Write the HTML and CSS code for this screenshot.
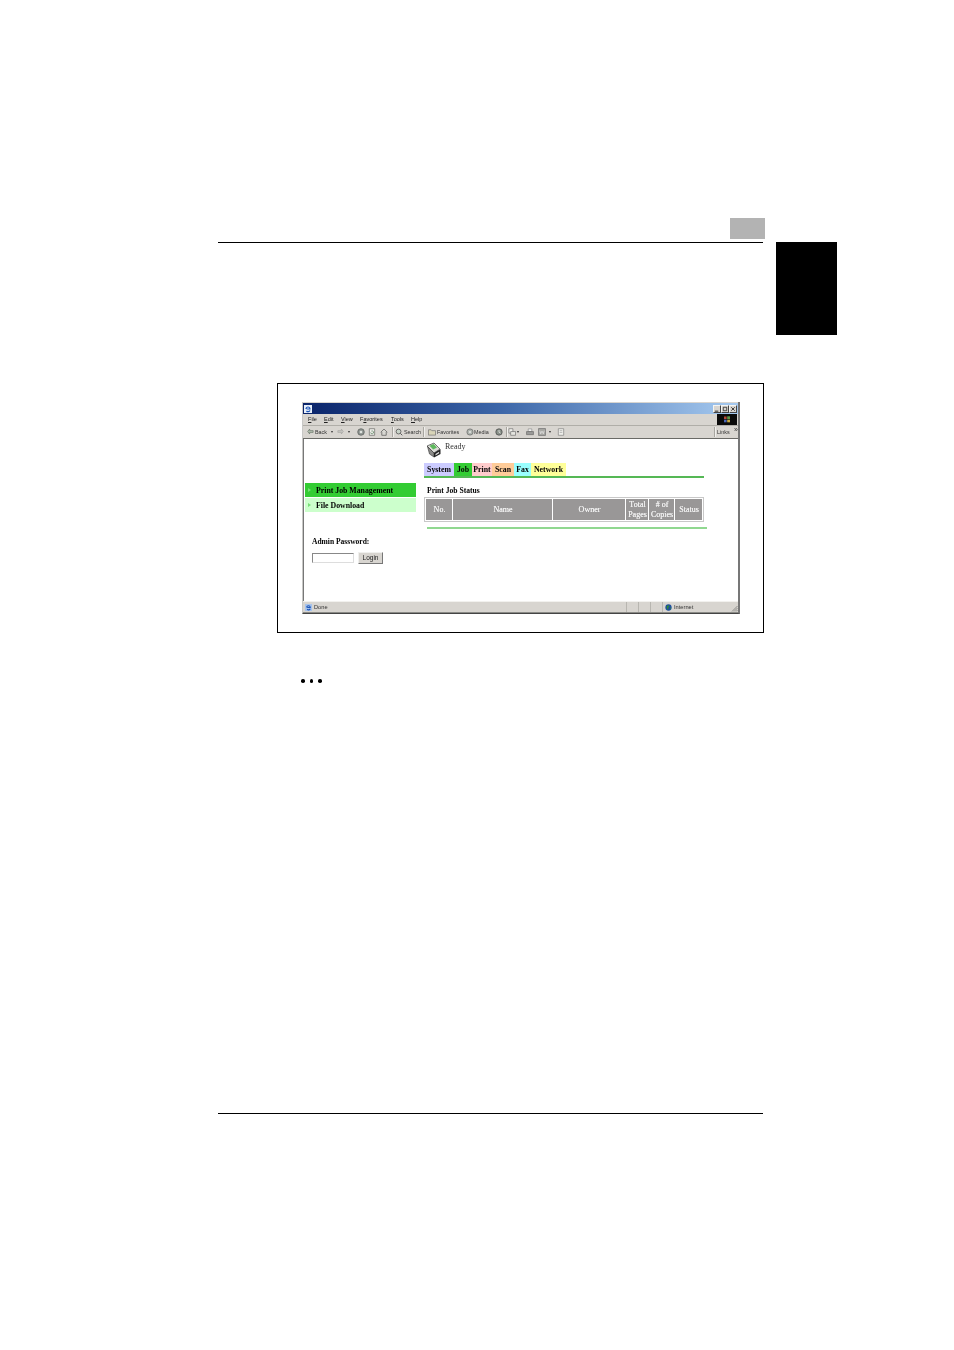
FILE: index.html
```html
<!DOCTYPE html>
<html lang="en">
<head>
<meta charset="utf-8">
<title>Print Job Status</title>
<link rel="stylesheet" href="styles.css">
</head>
<body>
<div class="page">
  <header class="head">
    <div class="chapter-box"></div>
    <div class="rule"></div>
  </header>
  <div class="side-tab"></div>

  <section class="frame">
    <div class="window">
      <div class="titlebar">
        <svg class="app-icon" viewBox="0 0 8 8"><rect width="8" height="8" fill="#e8f0fa"/><path d="M2 4a2 2 0 1 1 4 0H2.600M6 5.500a2 2 0 0 1-3.500.3" fill="none" stroke="#1c55b8" stroke-width="1.200"/></svg>
        <div class="win-btns">
          <span class="win-btn"><svg viewBox="0 0 7 7"><path d="M1 6h4" stroke="#111" stroke-width="1"/></svg></span>
          <span class="win-btn"><svg viewBox="0 0 7 7"><path d="M1.500 1.500h4v4h-4z" fill="none" stroke="#111" stroke-width=".8"/></svg></span>
          <span class="win-btn"><svg viewBox="0 0 7 7"><path d="M1.500 1.500l4 4M5.500 1.500l-4 4" stroke="#111" stroke-width=".9"/></svg></span>
        </div>
      </div>

      <div class="menubar">
        <nav class="menu">
          <span class="m-file"><u>F</u>ile</span>
          <span class="m-edit"><u>E</u>dit</span>
          <span class="m-view"><u>V</u>iew</span>
          <span class="m-fav">F<u>a</u>vorites</span>
          <span class="m-tools"><u>T</u>ools</span>
          <span class="m-help"><u>H</u>elp</span>
        </nav>
        <div class="throbber">
          <svg viewBox="0 0 20 11"><rect width="20" height="11" fill="#0a0a0a"/><path d="M7 2.500h2.600v2.600H7z" fill="#b84a38"/><path d="M10.200 2.300h2.800v2.800h-2.800z" fill="#5a9a48"/><path d="M7 5.700h2.600v2.600H7z" fill="#4a66b8"/><path d="M10.200 5.700h2.800v2.600h-2.800z" fill="#c8aa40"/></svg>
        </div>
      </div>

      <div class="toolbar">
        <svg class="ic w8" viewBox="0 0 8 8"><path d="M7 3H3V1.200L.8 4 3 6.800V5h4z" fill="#b8c4b4" stroke="#5c6a5c" stroke-width=".7"/></svg>
        <span class="tb-text t-back">Back</span>
        <span class="drop d-back"></span>
        <svg class="ic w8 i-fwd" viewBox="0 0 8 8"><path d="M1 3h4V1.200L7.200 4 5 6.800V5H1z" fill="#c8c8c4" stroke="#a0a09c" stroke-width=".7"/></svg>
        <span class="drop d-fwd"></span>
        <svg class="ic w9 i-stop" viewBox="0 0 9 9"><circle cx="4.500" cy="4.500" r="3.700" fill="#8e9490" stroke="#5a5f5c" stroke-width=".8"/><circle cx="4.500" cy="4.500" r="1.500" fill="#dfe3df"/></svg>
        <svg class="ic w9 i-ref" viewBox="0 0 9 9"><path d="M1.500.8h6v7.400h-6z" fill="#eeeeea" stroke="#6a6a66" stroke-width=".8"/><path d="M3 5a1.600 1.600 0 1 0 .8-1.500" fill="none" stroke="#4f7a55" stroke-width=".8"/></svg>
        <svg class="ic w9 i-home" viewBox="0 0 9 9"><path d="M.8 4.800L4.500 1.200l3.700 3.600M2 4.500v3.700h5V4.500" fill="#d8d8d2" stroke="#555" stroke-width=".8"/></svg>
        <span class="tb-sep s-a"></span>
        <svg class="ic w9 i-search" viewBox="0 0 9 9"><circle cx="4" cy="4" r="2.700" fill="#c9d4c9" stroke="#555" stroke-width=".9"/><path d="M6 6l2.200 2.200" stroke="#555" stroke-width="1.100"/></svg>
        <span class="tb-text t-search">Search</span>
        <span class="tb-sep s-b"></span>
        <svg class="ic w9 i-favs" viewBox="0 0 9 9"><path d="M.5 2h3l.8 1h4.200v5H.5z" fill="#d8d4b8" stroke="#666" stroke-width=".7"/></svg>
        <span class="tb-text t-favs">Favorites</span>
        <svg class="ic w9 i-media" viewBox="0 0 9 9"><circle cx="4.500" cy="4.500" r="3.500" fill="#aeb4ae" stroke="#666" stroke-width=".8"/><circle cx="4.500" cy="4.500" r="1" fill="#eee"/></svg>
        <span class="tb-text t-media">Media</span>
        <svg class="ic w9 i-hist" viewBox="0 0 9 9"><circle cx="4.500" cy="4.500" r="3.600" fill="#8a928a" stroke="#444" stroke-width=".8"/><path d="M4.500 2.200v2.500l1.700 1" fill="none" stroke="#eee" stroke-width=".8"/></svg>
        <span class="tb-sep s-c"></span>
        <svg class="ic w9 i-mail" viewBox="0 0 9 9"><path d="M1 .8h4.500v5H1z" fill="#f0f0ec" stroke="#666" stroke-width=".7"/><path d="M3 4h5.500v4.200H3z" fill="#e6e6e0" stroke="#666" stroke-width=".7"/></svg>
        <span class="drop d-mail"></span>
        <svg class="ic w9 i-print" viewBox="0 0 9 9"><path d="M2.500 1h4v3h-4z" fill="#f2f2f2" stroke="#777" stroke-width=".6"/><path d="M.6 4h7.800v3.500H.6z" fill="#9a9a98" stroke="#555" stroke-width=".6"/></svg>
        <svg class="ic w9 i-word" viewBox="0 0 9 9"><path d="M.6.6h7.800v7.800H.6z" fill="#a8a8a4" stroke="#666" stroke-width=".7"/><path d="M2 3l1 3.500L4.500 3.500 6 6.500 7 3" fill="none" stroke="#eee" stroke-width=".7"/></svg>
        <span class="drop d-word"></span>
        <svg class="ic w9 i-disc" viewBox="0 0 9 9"><path d="M1.500.8h6v7.400h-6z" fill="#eeeeea" stroke="#777" stroke-width=".7"/><path d="M3 3h3M3 5h3" stroke="#999" stroke-width=".7"/></svg>
        <span class="tb-sep s-d"></span>
        <span class="tb-text t-links">Links</span>
        <span class="tb-more">»</span>
      </div>

      <div class="content">
        <aside class="sidebar">
          <a class="side-item is-active"><span class="arrow"></span>Print Job Management</a>
          <a class="side-item"><span class="arrow"></span>File Download</a>
          <div class="login-label">Admin Password:</div>
          <div class="login-row">
            <span class="pw"></span>
            <span class="login-btn">Login</span>
          </div>
        </aside>
        <main class="main">
          <div class="status-line">
            <svg class="printer" viewBox="0 0 16 16">
              <path d="M1 4l7-3 6 6-6 4z" fill="#dcdcd8" stroke="#444" stroke-width=".7"/>
              <path d="M3.500 3.800l4-1.800 3.500 3.500-3.800 2z" fill="#5db85d"/>
              <path d="M1.500 4.500L3.500 12l4.500 3V11z" fill="#8a8a88" stroke="#333" stroke-width=".6"/>
              <path d="M8 11l6.500-4v5L8 15.500z" fill="#222"/>
              <path d="M9.500 12l3.600-2.200v1.500l-3.600 2.200z" fill="#dedede"/>
            </svg>
            <span>Ready</span>
          </div>
          <div class="tabs">
            <span class="tab t-system">System</span>
            <span class="tab t-job">Job</span>
            <span class="tab t-print">Print</span>
            <span class="tab t-scan">Scan</span>
            <span class="tab t-fax">Fax</span>
            <span class="tab t-network">Network</span>
          </div>
          <div class="tabs-rule"></div>
          <h1 class="job-title">Print Job Status</h1>
          <table class="jobs">
            <thead>
              <tr>
                <th class="c-no">No.</th>
                <th class="c-name">Name</th>
                <th class="c-owner">Owner</th>
                <th class="c-total">Total<br>Pages</th>
                <th class="c-copies"># of<br>Copies</th>
                <th class="c-status">Status</th>
              </tr>
            </thead>
          </table>
          <div class="jobs-rule"></div>
        </main>
      </div>

      <footer class="statusbar">
        <svg class="done-ic" viewBox="0 0 8 8"><rect width="8" height="8" fill="#a8c4ec"/><path d="M2 4a2 2 0 1 1 4 0H2.600M6 5.500a2 2 0 0 1-3.500.3" fill="none" stroke="#1c55b8" stroke-width="1.300"/></svg>
        <span class="done">Done</span>
        <span class="cell"></span>
        <span class="cell"></span>
        <span class="cell"></span>
        <span class="zone">
          <svg class="globe" viewBox="0 0 8 8"><circle cx="4" cy="4" r="3.600" fill="#1f4f9e"/><path d="M2 2.200l2-.8 1 1.500-1.500 1.500.5 2-1.500-.5-.5-2zM5.500 4.500l1.500-.5-.5 2z" fill="#2e8a3a"/></svg>
          Internet
        </span>
        <svg class="grip" viewBox="0 0 7 7"><path d="M6.500 1L1 6.500M6.500 3L3 6.500M6.500 5L5 6.500" stroke="#7c7c78" stroke-width=".8"/></svg>
      </footer>
    </div>
  </section>

  <div class="dots"><i></i><i></i><i></i></div>
  <div class="foot-rule"></div>
</div>
</body>
</html>
```

FILE: styles.css
```css
* { box-sizing: border-box; }
html, body { margin: 0; padding: 0; background: #fff; }
.page { position: relative; width: 954px; height: 1350px; padding: 218px 0 0 218px; overflow: hidden; }

.head { width: 547px; }
.chapter-box { width: 35px; height: 21px; margin-left: 512px; background: #b3b3b3; }
.rule { width: 545px; height: 1px; margin-top: 3px; background: #000; }
.side-tab { position: absolute; left: 776px; top: 242px; width: 61px; height: 93px; background: #000; }

.frame { width: 487px; height: 250px; margin: 140px 0 0 59px; padding: 18px 0 0 24px; border: 1px solid #000; }
.window { display: flex; flex-direction: column; width: 438px; height: 212px; padding-top: 1px; background: #d8d5d0; border-right: 2px solid #777; border-bottom: 1px solid #444; border-left: 1px solid #c8c8c6; font-family: "Liberation Sans", sans-serif; filter: blur(.35px); }

.titlebar { display: flex; align-items: center; justify-content: space-between; flex: none; height: 11px; padding: 0 1px; background: linear-gradient(90deg, #0a246a 0%, #3c66a8 45%, #a6caf0 100%); }
.app-icon { width: 8px; height: 8px; }
.win-btns { display: flex; }
.win-btn { display: block; width: 8px; height: 8px; background: #d8d5d0; border: 1px solid; border-color: #f4f4f2 #444 #444 #f4f4f2; }
.win-btn svg { display: block; width: 6px; height: 6px; }

.menubar { display: flex; align-items: center; justify-content: space-between; flex: none; height: 12px; border-bottom: 1px solid #b0aea8; }
.menu { display: flex; padding: 0 0 2px 5px; font-size: 5.500px; color: #222; }
.menu span { display: block; }
.m-file { width: 16px; }
.m-edit { width: 17px; }
.m-view { width: 19px; }
.m-fav { width: 31px; }
.m-tools { width: 20px; }
.throbber { width: 20px; height: 11px; margin-right: 1px; }
.throbber svg { display: block; width: 20px; height: 11px; }

.toolbar { display: flex; align-items: center; flex: none; height: 13px; padding: 0 0 1px 4px; font-size: 5.400px; color: #333; border-bottom: 1px solid #6a6a66; }
.ic { flex: none; display: block; }
.w8 { width: 7px; height: 7px; }
.w9 { width: 8px; height: 8px; }
.tb-text { display: block; flex: none; }
.t-back { width: 12px; margin-left: 1px; }
.drop { flex: none; width: 0; height: 0; border: 1.500px solid transparent; border-top: 2px solid #333; border-bottom: 0; }
.d-back { margin-left: 4px; }
.i-fwd { margin-left: 4px; }
.d-fwd { margin-left: 4px; }
.i-stop { margin-left: 7px; }
.i-ref { margin-left: 3px; }
.i-home { margin-left: 4px; }
.tb-sep { flex: none; display: block; width: 1px; height: 10px; background: #a8a6a0; border-right: 1px solid #f0efec; box-sizing: content-box; }
.s-a { margin-left: 4px; }
.i-search { margin-left: 1px; }
.t-search { width: 17px; margin-left: 1px; }
.s-b { margin-left: 2px; }
.i-favs { margin-left: 3px; }
.t-favs { width: 24px; margin-left: 1px; }
.i-media { margin-left: 5px; }
.t-media { width: 15px; }
.i-hist { margin-left: 6px; }
.s-c { margin-left: 3px; }
.i-mail { margin-left: 0; }
.d-mail { margin-left: 1px; }
.i-print { margin-left: 7px; }
.i-word { margin-left: 4px; }
.d-word { margin-left: 3px; }
.i-disc { margin-left: 6px; }
.s-d { margin-left: 149px; }
.t-links { width: 14px; margin-left: 1px; }
.tb-more { margin-top: -3px; margin-left: 3px; font-size: 7px; line-height: 6px; }

.content { display: grid; grid-template-columns: 120px 1fr; flex: 1; min-height: 0; background: #fff; font-family: "Liberation Serif", serif; color: #000; border-left: 1px solid #777; }
.sidebar { padding: 44px 8px 0 1px; }
.side-item { display: flex; align-items: center; height: 14px; margin-bottom: 1px; padding-left: 3px; font-size: 7.800px; font-weight: bold; background: #ccffcc; }
.side-item.is-active { background: #33cc33; }
.arrow { width: 0; height: 0; margin-right: 5px; border: 2.500px solid transparent; border-left: 3px solid #77e077; border-right: 0; }
.login-label { margin: 25px 0 0 7px; font-size: 7.500px; line-height: 9px; font-weight: bold; }
.login-row { display: flex; align-items: center; gap: 4px; margin: 6px 0 0 7px; }
.pw { display: block; width: 42px; height: 10px; background: #fff; border: 1px solid; border-color: #888 #ddd #ddd #888; }
.login-btn { display: block; width: 25px; height: 12px; font-family: "Liberation Sans", sans-serif; font-size: 6.500px; line-height: 10px; text-align: center; color: #222; background: #d8d5d0; border: 1px solid; border-color: #f0f0ee #777 #777 #f0f0ee; }

.status-line { display: flex; align-items: flex-start; height: 24px; padding: 3px 0 0 2px; font-size: 8px; line-height: 9px; color: #333; }
.printer { width: 16px; height: 16px; margin-right: 3px; }
.tabs { display: flex; height: 13px; font-size: 7.800px; font-weight: bold; line-height: 13px; }
.tab { display: block; text-align: center; }
.t-system { width: 30px; background: #ccccff; }
.t-job { width: 18px; background: #33cc33; }
.t-print { width: 20px; background: #ffcccc; }
.t-scan { width: 22px; background: #ffcc99; }
.t-fax { width: 17px; background: #99ffff; }
.t-network { width: 35px; background: #ffff99; }
.tabs-rule { width: 280px; height: 2px; background: #55b855; }
.job-title { margin: 8px 0 0 3px; font-size: 7.600px; line-height: 9px; font-weight: bold; }

.jobs { width: 280px; height: 25px; margin-top: 2px; border: 1px solid #c8c8c8; border-collapse: separate; border-spacing: 1px; table-layout: fixed; }
.jobs th { padding: 0 0 0 1px; font-size: 8px; line-height: 9.500px; font-weight: normal; text-shadow: 0 0 .3px #fff; color: #eee; background: #999797; text-align: center; }
.c-no { width: 26px; }
.c-name { width: 99px; }
.c-owner { width: 72px; }
.c-total { width: 22px; }
.c-copies { width: 25px; }
.c-status { width: 27px; }
.jobs-rule { width: 280px; height: 2px; margin: 5px 0 0 3px; background: #90d890; }

.statusbar { display: flex; align-items: center; flex: none; height: 12px; padding-left: 2px; font-size: 5.700px; color: #333; border-top: 1px solid #f2f1ee; border-bottom: 1px solid #8a8a86; }
.done-ic { flex: none; width: 7px; height: 7px; }
.done { flex: none; margin-left: 2px; width: 312px; }
.cell { flex: none; display: block; width: 12px; height: 10px; border-left: 1px solid #b8b6b0; }
.zone { flex: none; display: flex; align-items: center; gap: 2px; width: 69px; height: 10px; padding-left: 2px; border-left: 1px solid #b8b6b0; }
.globe { width: 7px; height: 7px; }
.grip { flex: none; width: 7px; height: 7px; margin-top: 3px; }

.dots { display: flex; gap: 5px; margin: 46px 0 0 83px; height: 4px; }
.dots i { display: block; width: 3.500px; height: 3.500px; background: #000; border-radius: 50%; }
.foot-rule { width: 545px; height: 1px; margin-top: 430px; background: #000; }
```
